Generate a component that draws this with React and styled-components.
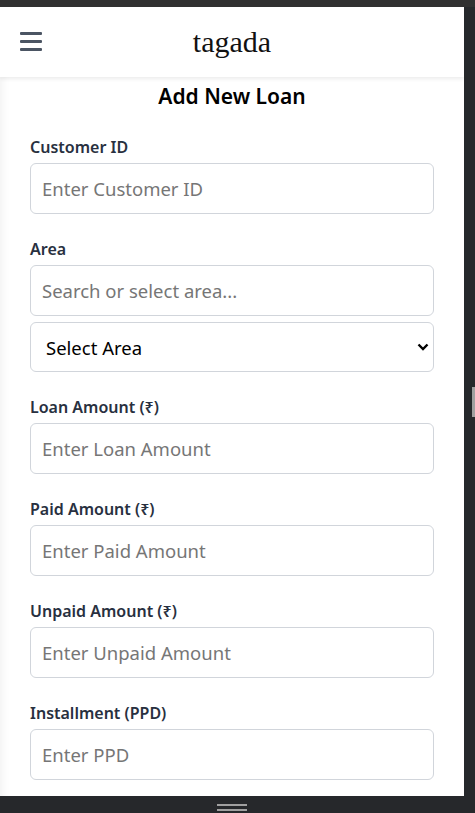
import React from "react";
import styled, { createGlobalStyle } from "styled-components";

const fields = [
  { label: "Customer ID", placeholder: "Enter Customer ID" },
  { label: "Area", placeholder: "Search or select area...", select: "Select Area" },
  { label: "Loan Amount (₹)", placeholder: "Enter Loan Amount" },
  { label: "Paid Amount (₹)", placeholder: "Enter Paid Amount" },
  { label: "Unpaid Amount (₹)", placeholder: "Enter Unpaid Amount" },
  { label: "Installment (PPD)", placeholder: "Enter PPD" },
];

const App = () => {
  return (
    <>
      <GlobalStyle />
      <Frame>
        <TopBar />
        <Middle>
          <Viewport>
            <Header>
              <MenuBtn aria-label="Open menu">
                <svg width="22" height="19" viewBox="0 0 22 19">
                  <rect x="0" y="0" width="22" height="3" rx="1" fill="#4b5563" />
                  <rect x="0" y="8" width="22" height="3" rx="1" fill="#4b5563" />
                  <rect x="0" y="16" width="22" height="3" rx="1" fill="#4b5563" />
                </svg>
              </MenuBtn>
              <Brand>tagada</Brand>
              <span />
            </Header>
            <Main>
              <Title>Add New Loan</Title>
              {fields.map((f) => (
                <Group key={f.label}>
                  <Label>{f.label}</Label>
                  <Input placeholder={f.placeholder} />
                  {f.select && (
                    <SelectWrap>
                      <Select defaultValue="">
                        <option value="">{f.select}</option>
                      </Select>
                      <Chevron width="12" height="8" viewBox="0 0 12 8">
                        <path
                          d="M1.5 1.5 L6 6 L10.5 1.5"
                          fill="none"
                          stroke="#000"
                          strokeWidth="2.4"
                        />
                      </Chevron>
                    </SelectWrap>
                  )}
                </Group>
              ))}
            </Main>
          </Viewport>
          <SideStrip>
            <SideGrip />
          </SideStrip>
        </Middle>
        <BottomBar>
          <BottomGrip />
        </BottomBar>
      </Frame>
    </>
  );
};

const GlobalStyle = createGlobalStyle`
  * { box-sizing: border-box; }
  html, body { margin: 0; padding: 0; background: #26282b; }
  body { font-family: "Noto Sans", "Open Sans", sans-serif; }
`;

const Frame = styled.div`
  width: 475px;
  height: 813px;
  display: flex;
  flex-direction: column;
  background: #26282b;
  overflow: hidden;
`;
const TopBar = styled.div`
  height: 7px;
  flex: none;
  background: #303030;
`;
const Middle = styled.div`
  flex: 1;
  display: flex;
  min-height: 0;
`;
const Viewport = styled.div`
  width: 464px;
  flex: none;
  background: #fff;
  overflow: hidden;
  box-shadow: inset 10px 0 10px -8px rgba(0, 0, 0, 0.06);
`;
const SideStrip = styled.div`
  flex: 1;
  display: flex;
  align-items: center;
  justify-content: flex-end;
  background: #26282b;
`;
const SideGrip = styled.div`
  width: 3px;
  height: 30px;
  background: #a0a0a0;
`;
const BottomBar = styled.div`
  height: 17px;
  flex: none;
  display: flex;
  justify-content: center;
  padding-top: 8px;
  padding-right: 11px;
  background: #26282b;
`;
const BottomGrip = styled.div`
  width: 30px;
  height: 7px;
  border-top: 2px solid #a0a0a0;
  border-bottom: 2px solid #a0a0a0;
`;
const Header = styled.header`
  height: 70px;
  display: grid;
  grid-template-columns: 1fr auto 1fr;
  align-items: center;
  padding: 0 20px;
  background: #fff;
  box-shadow: 0 2px 4px rgba(0, 0, 0, 0.08);
  position: relative;
`;
const MenuBtn = styled.button`
  justify-self: start;
  display: flex;
  padding: 0;
  margin-top: -2px;
  border: none;
  background: none;
`;
const Brand = styled.div`
  font-family: "Liberation Serif", serif;
  font-size: 30px;
  color: #111;
`;
const Main = styled.main`
  padding: 5px 30px 0 30px;
`;
const Title = styled.h2`
  margin: 0 0 24px;
  text-align: center;
  font-size: 21px;
  line-height: 29px;
  font-weight: 600;
  color: #000;
`;
const Group = styled.div`
  display: flex;
  flex-direction: column;
  margin-bottom: 23px;
`;
const Label = styled.label`
  font-size: 16px;
  line-height: 24px;
  font-weight: 600;
  color: #283040;
  margin-bottom: 4px;
`;
const Input = styled.input`
  height: 51px;
  width: 100%;
  padding: 0 11px;
  border: 1px solid #d1d5db;
  border-radius: 6px;
  font-family: inherit;
  font-size: 18.5px;
  color: #111;
  outline: none;
  &::placeholder {
    color: #767676;
  }
`;
const SelectWrap = styled.div`
  position: relative;
  margin-top: 6px;
`;
const Select = styled.select`
  appearance: none;
  width: 100%;
  height: 50px;
  padding: 0 15px;
  border: 1px solid #d1d5db;
  border-radius: 6px;
  background: #fff;
  font-family: inherit;
  font-size: 18.5px;
  color: #000;
  outline: none;
`;
const Chevron = styled.svg`
  position: absolute;
  right: 5px;
  top: 21px;
`;

export default App;
